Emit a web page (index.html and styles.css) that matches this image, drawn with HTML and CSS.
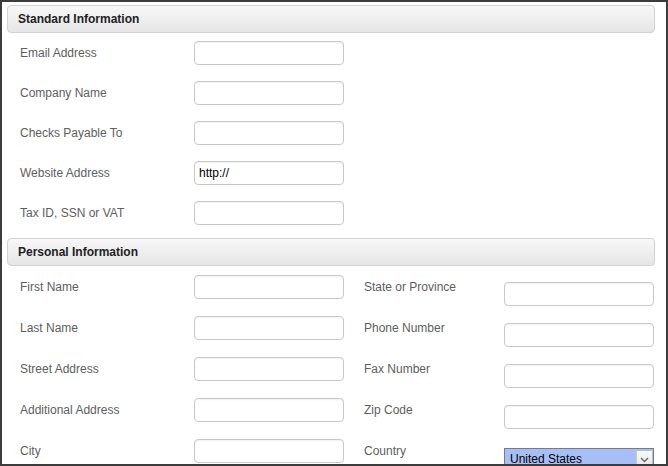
FILE: index.html
```html
<!DOCTYPE html>
<html lang="en">
<head>
<meta charset="utf-8"/>
<title>Account Details</title>
<meta content="width=device-width, initial-scale=1.0" name="viewport"/>
<link rel="stylesheet" href="styles.css">
</head>
<body>
<div class="frame">
<div class="panel-head">Standard Information</div>
<div class="rows std">
<div class="row"><label>Email Address</label><input type="text"/></div>
<div class="row"><label>Company Name</label><input type="text"/></div>
<div class="row"><label>Checks Payable To</label><input type="text"/></div>
<div class="row"><label>Website Address</label><input type="text" value="http://"/></div>
<div class="row"><label>Tax ID, SSN or VAT</label><input type="text"/></div>
</div>
<div class="panel-head">Personal Information</div>
<div class="rows personal">
<div class="row"><label>First Name</label><input type="text"/><label class="col2">State or Province</label><input class="low" type="text"/></div>
<div class="row"><label>Last Name</label><input type="text"/><label class="col2">Phone Number</label><input class="low" type="text"/></div>
<div class="row"><label>Street Address</label><input type="text"/><label class="col2">Fax Number</label><input class="low" type="text"/></div>
<div class="row"><label>Additional Address</label><input type="text"/><label class="col2">Zip Code</label><input class="low" type="text"/></div>
<div class="row"><label>City</label><input type="text"/><label class="col2">Country</label>
<div class="select">
<span class="select-text">United States</span>
<span class="select-btn"><svg width="9" height="6" viewBox="0 0 9 6"><path d="M1 1l3.5 3.5L8 1" fill="none" stroke="#666" stroke-width="1.4"/></svg></span>
</div>
</div>
</div>
</div>
</body>
</html>
```

FILE: styles.css
```css
body { margin: 0; font-family: "Liberation Sans", Arial, sans-serif; background: #fff; }
.frame {
    width: 668px;
    height: 466px;
    box-sizing: border-box;
    border: 2px solid #3c3c3c;
    background: #fff;
    overflow: hidden;
    padding-top: 3px;
}
.panel-head {
    margin: 0 11px 0 5px;
    height: 28px;
    box-sizing: border-box;
    border: 1px solid #d2d2d2;
    border-radius: 4px;
    background: linear-gradient(#f7f7f7, #e6e6e6);
    padding-left: 10px;
    line-height: 26px;
    font-size: 12px;
    font-weight: bold;
    color: #222;
}
.rows {
    display: flex;
    flex-direction: column;
    padding-left: 18px;
}
.rows.std { padding-top: 8px; gap: 16px; padding-bottom: 13px; }
.rows.personal { padding-top: 9px; gap: 17px; }
.row {
    display: flex;
    align-items: flex-start;
    height: 24px;
}
.row label {
    width: 174px;
    line-height: 24px;
    font-size: 12px;
    color: #5e5e5e;
}
.row label.col2 {
    width: 140px;
    margin-left: 20px;
}
.row input {
    width: 150px;
    height: 24px;
    box-sizing: border-box;
    margin: 0;
    border: 1px solid #c9c9c9;
    border-radius: 4px;
    box-shadow: inset 0 1px 2px rgba(0,0,0,0.06);
    padding: 0 4px;
    font-family: inherit;
    font-size: 12px;
    color: #000;
    outline: none;
}
.row .low { margin-top: 7px; }
.select {
    width: 150px;
    height: 20px;
    box-sizing: border-box;
    margin-top: 9px;
    border: 1px solid #7b7b7b;
    border-bottom: none;
    background: #a7bff7;
    display: flex;
    align-items: center;
}
.select-text {
    flex: 1;
    padding-left: 5px;
    padding-top: 1px;
    font-size: 12px;
    color: #000;
}
.select-btn {
    width: 15px;
    height: 17px;
    margin-right: 1px;
    margin-top: 2px;
    background: linear-gradient(#fafafa, #e4e4e4);
    border-left: 1px solid #c8c8c8;
    display: flex;
    align-items: center;
    justify-content: center;
}
```
